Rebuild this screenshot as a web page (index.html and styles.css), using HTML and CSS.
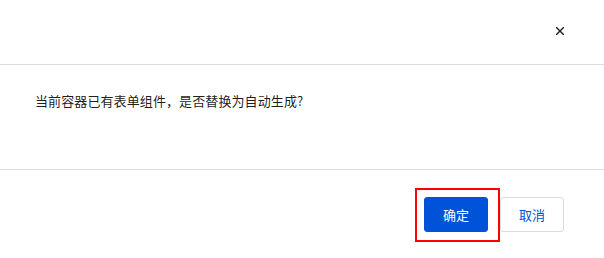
FILE: index.html
```html
<!DOCTYPE html>
<html lang="zh-CN">
<head>
<meta charset="utf-8">
<link rel="stylesheet" href="styles.css">
</head>
<body>
<div class="dialog">
  <div class="header">
    <button class="close" aria-label="关闭">
      <svg width="8" height="8" viewBox="0 0 8 8"><path d="M0.5 0.5L7.5 7.5M7.5 0.5L0.5 7.5" stroke="#1f1f1f" stroke-width="1.4" stroke-linecap="square"/></svg>
    </button>
  </div>
  <div class="body">当前容器已有表单组件，是否替换为自动生成?</div>
  <div class="footer">
    <div class="confirm-wrap">
      <button class="btn btn-primary">确定</button>
      <span class="highlight"></span>
    </div>
    <button class="btn btn-default">取消</button>
  </div>
</div>
</body>
</html>
```

FILE: styles.css
```css
* { box-sizing: border-box; }
html, body { margin: 0; padding: 0; background: #fff; }
body {
  font-family: "Noto Sans CJK SC", "Noto Sans", sans-serif;
  color: rgba(0, 0, 0, 0.9);
}
.dialog {
  width: 604px;
  height: 258px;
  display: flex;
  flex-direction: column;
}
.header {
  height: 65px;
  border-bottom: 1px solid #dcdcdc;
  display: flex;
  justify-content: flex-end;
  align-items: center;
  padding: 0 40px 2px 0;
}
.close {
  border: 0;
  background: none;
  padding: 0;
  width: 8px;
  height: 8px;
  display: flex;
}
.body {
  height: 104px;
  padding: 25px 0 0 35px;
  font-size: 13px;
  letter-spacing: 0.1px;
  line-height: 22px;
}
.footer {
  flex: 1;
  border-top: 1px solid #dcdcdc;
  display: flex;
  justify-content: flex-end;
  align-items: flex-start;
  gap: 12px;
  padding: 27px 40px 0 0;
}
.confirm-wrap { position: relative; display: flex; }
.btn {
  width: 64px;
  height: 35px;
  border-radius: 3px;
  font-family: inherit;
  font-size: 13px;
  padding: 0;
  cursor: pointer;
}
.btn-primary {
  background: #0052d9;
  border: 1px solid #0052d9;
  color: #fff;
}
.btn-default {
  background: #fff;
  border: 1px solid #dcdcdc;
  color: #0052d9;
}
.highlight {
  position: absolute;
  top: -9px;
  left: -9px;
  right: -12px;
  bottom: -10px;
  border: 2px solid #ff0000;
  pointer-events: none;
}
```
